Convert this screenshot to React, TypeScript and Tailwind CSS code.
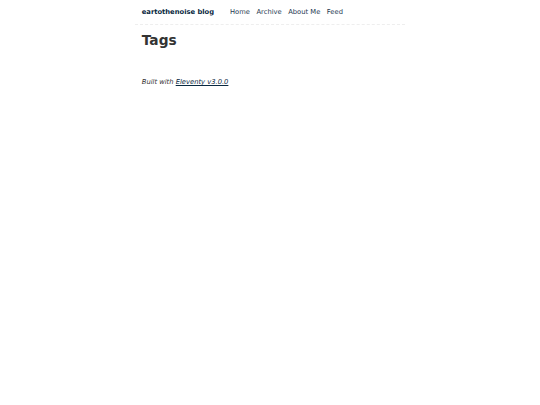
export default function App() {
  const nav = ["Home", "Archive", "About Me", "Feed"]

  return (
    <div className="min-h-screen bg-white text-[#222] text-[6.75px] leading-[1.5] font-['DejaVu_Sans',sans-serif]">
      <div className="mx-auto max-w-[270px]">
        <header className="flex flex-wrap items-center gap-x-[2.5px] p-[6.75px] border-b border-dashed border-[#eeeeee]">
          <a href="#" className="mr-[13.5px] font-bold text-[#082840]">
            eartothenoise blog
          </a>
          <nav>
            <ul className="flex gap-[6.5px]">
              {nav.map((item) => (
                <li key={item}>
                  <a href="#" className="text-[#1f3a52]">
                    {item}
                  </a>
                </li>
              ))}
            </ul>
          </nav>
        </header>

        <main className="px-[6.75px] pt-[5px]">
          <h1 className="text-[13.75px] font-bold leading-[1.5] text-[#333]">Tags</h1>
        </main>

        <footer className="px-[6.75px] pt-[27px] text-[#333]">
          <em>
            Built with{" "}
            <a href="#" className="underline text-[#082840]">
              Eleventy v3.0.0
            </a>
          </em>
        </footer>
      </div>
    </div>
  )
}
